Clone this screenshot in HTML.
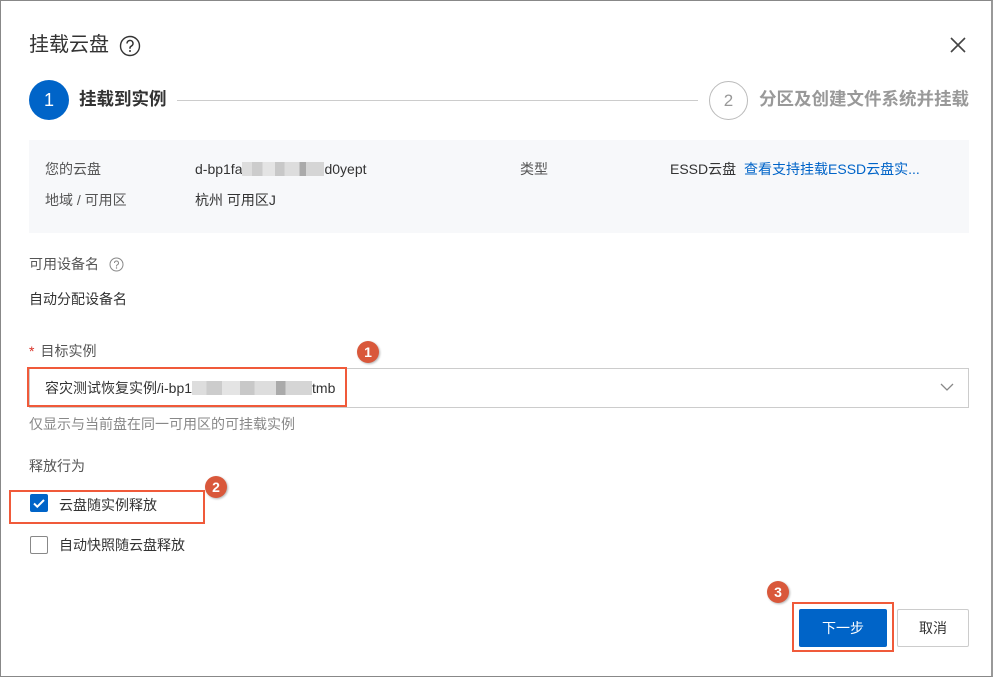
<!DOCTYPE html>
<html><head><meta charset="utf-8"><style>
*{margin:0;padding:0;box-sizing:border-box}
body{width:993px;height:677px;background:#fff;font-family:"Liberation Sans","Noto Sans CJK SC",sans-serif;color:#333;position:relative;overflow:hidden;font-size:14px}
.frame{position:absolute;left:0;top:0;width:993px;height:677px;border:1px solid #888;border-right:2px solid #999}
.a{position:absolute;white-space:nowrap;line-height:1}
.badge{position:absolute;width:22px;height:22px;border-radius:50%;background:#d9583b;color:#fff;font-weight:bold;font-size:14px;text-align:center;line-height:22px;box-shadow:1px 1px 2px rgba(0,0,0,.3)}
.red{position:absolute;border:2px solid #f05a3a}
.blur{display:inline-block;height:14px;vertical-align:-2px;background:linear-gradient(90deg,#ddd 0 12%,#ccc 12% 25%,#e4e4e4 25% 40%,#c8c8c8 40% 52%,#ddd 52% 70%,#aaa 70% 78%,#d5d5d5 78% 100%)}
</style></head><body>
<div class="frame"></div>
<div class="a" style="left:29px;top:35px;font-size:20px;color:#333">挂载云盘</div>
<svg class="a" style="left:119px;top:35px" width="22" height="22" viewBox="0 0 22 22"><circle cx="11" cy="11" r="9.5" fill="none" stroke="#333" stroke-width="1.4"/><path d="M8 8.5a3 3 0 1 1 4.2 2.7c-.8.4-1.2 1-1.2 1.8v.8" fill="none" stroke="#333" stroke-width="1.5"/><circle cx="11" cy="16" r="1" fill="#333"/></svg>
<svg class="a" style="left:949px;top:36px" width="18" height="18" viewBox="0 0 18 18"><path d="M2 2L16 16M16 2L2 16" stroke="#444" stroke-width="1.6"/></svg>

<div class="a" style="left:29px;top:80px;width:40px;height:40px;border-radius:50%;background:#0064c8;color:#fff;font-size:18px;text-align:center;line-height:40px">1</div>
<div class="a" style="left:79px;top:91px;font-size:17.5px;font-weight:bold;color:#333">挂载到实例</div>
<div class="a" style="left:177px;top:100px;width:521px;height:1px;background:#ccc"></div>
<div class="a" style="left:709px;top:81px;width:39px;height:39px;border-radius:50%;border:1px solid #bbb;color:#999;font-size:17px;text-align:center;line-height:37px">2</div>
<div class="a" style="left:759px;top:91px;font-size:17.5px;font-weight:bold;color:#999">分区及创建文件系统并挂载</div>

<div class="a" style="left:29px;top:140px;width:940px;height:93px;background:#f7f8fa"></div>
<div class="a" style="left:45px;top:162px;color:#555">您的云盘</div>
<div class="a" style="left:195px;top:162px;color:#333">d-bp1fa<span class="blur" style="width:82px"></span>d0yept</div>
<div class="a" style="left:45px;top:193px;color:#555">地域 / 可用区</div>
<div class="a" style="left:195px;top:193px;color:#333">杭州 可用区J</div>
<div class="a" style="left:520px;top:162px;color:#555">类型</div>
<div class="a" style="left:670px;top:162px;color:#333">ESSD云盘 <span style="color:#0064c8;margin-left:4px">查看支持挂载ESSD云盘实...</span></div>

<div class="a" style="left:29px;top:257px;color:#555">可用设备名</div>
<svg class="a" style="left:109px;top:257px" width="15" height="15" viewBox="0 0 15 15"><circle cx="7.5" cy="7.5" r="6.5" fill="none" stroke="#888" stroke-width="1"/><path d="M5.5 6a2 2 0 1 1 2.8 1.8c-.5.3-.8.6-.8 1.2v.5" fill="none" stroke="#888" stroke-width="1"/><circle cx="7.5" cy="11" r=".7" fill="#888"/></svg>
<div class="a" style="left:29px;top:292px;color:#333">自动分配设备名</div>

<div class="a" style="left:29px;top:344px;color:#555"><span style="color:#d93026;margin-right:6px">*</span>目标实例</div>
<div class="a" style="left:29px;top:368px;width:940px;height:40px;border:1px solid #ccc;background:#fff"></div>
<div class="a" style="left:45px;top:381px;color:#333">容灾测试恢复实例/i-bp1<span class="blur" style="width:120px"></span>tmb</div>
<svg class="a" style="left:940px;top:383px" width="14" height="9" viewBox="0 0 14 9"><path d="M1 1l6 6 6-6" fill="none" stroke="#888" stroke-width="1.3"/></svg>
<div class="red" style="left:27px;top:367px;width:320px;height:40px"></div>
<div class="badge" style="left:357px;top:341px">1</div>

<div class="a" style="left:29px;top:417px;color:#888">仅显示与当前盘在同一可用区的可挂载实例</div>
<div class="a" style="left:29px;top:459px;color:#555">释放行为</div>

<div class="a" style="left:30px;top:494px;width:18px;height:18px;background:#0064c8;border-radius:2px"></div>
<svg class="a" style="left:30px;top:494px" width="18" height="18" viewBox="0 0 18 18"><path d="M4 9.5l3.3 3.2L14 6" fill="none" stroke="#fff" stroke-width="2"/></svg>
<div class="a" style="left:59px;top:498px;color:#333">云盘随实例释放</div>
<div class="red" style="left:9px;top:490px;width:196px;height:34px"></div>
<div class="badge" style="left:205px;top:476px">2</div>

<div class="a" style="left:30px;top:536px;width:18px;height:18px;border:1px solid #888;border-radius:2px;background:#fff"></div>
<div class="a" style="left:59px;top:538px;color:#333">自动快照随云盘释放</div>

<div class="a" style="left:799px;top:609px;width:88px;height:38px;background:#0064c8;border-radius:2px;color:#fff;text-align:center;line-height:38px">下一步</div>
<div class="red" style="left:792px;top:602px;width:102px;height:50px"></div>
<div class="a" style="left:897px;top:609px;width:72px;height:38px;border:1px solid #ccc;border-radius:2px;color:#333;text-align:center;line-height:36px">取消</div>
<div class="badge" style="left:767px;top:581px">3</div>
</body></html>
